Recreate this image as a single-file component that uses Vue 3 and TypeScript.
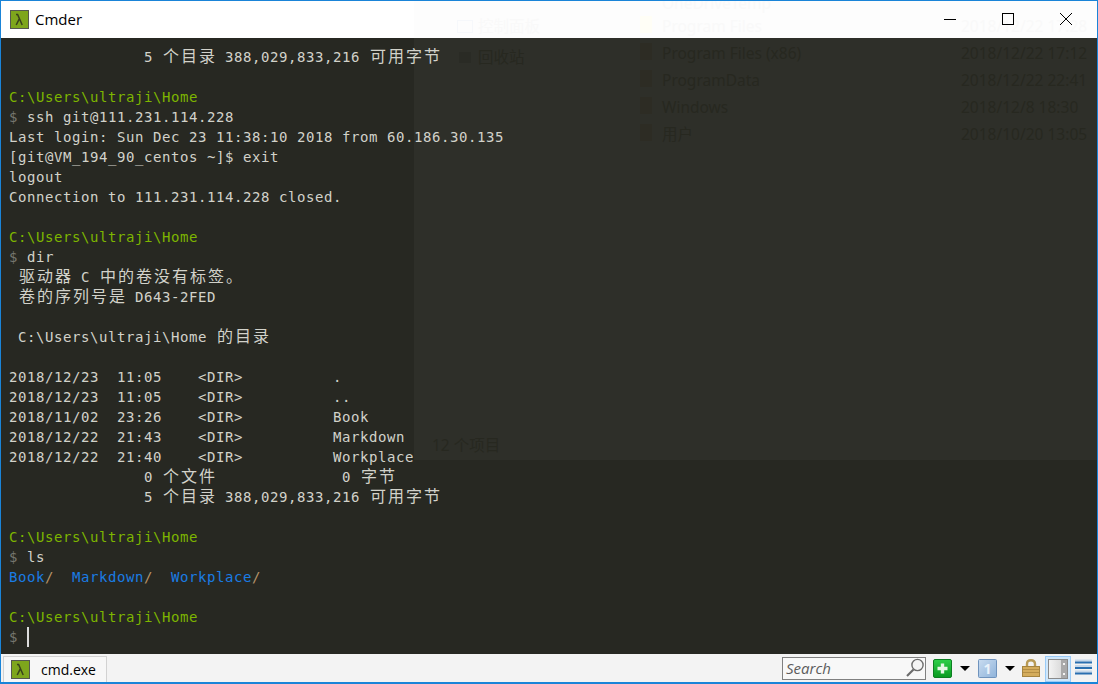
<script setup lang="ts">
type Seg = { t: string; c: string }
const txt = 'txt'
const path = 'C:\\Users\\ultraji\\Home'
const raw: Seg[][] = [
  [{ t: '               5 个目录 388,029,833,216 可用字节', c: txt }],
  [],
  [{ t: path, c: 'grn' }],
  [{ t: '$ ', c: 'dol' }, { t: 'ssh git@111.231.114.228', c: txt }],
  [{ t: 'Last login: Sun Dec 23 11:38:10 2018 from 60.186.30.135', c: txt }],
  [{ t: '[git@VM_194_90_centos ~]$ exit', c: txt }],
  [{ t: 'logout', c: txt }],
  [{ t: 'Connection to 111.231.114.228 closed.', c: txt }],
  [],
  [{ t: path, c: 'grn' }],
  [{ t: '$ ', c: 'dol' }, { t: 'dir', c: txt }],
  [{ t: ' 驱动器 C 中的卷没有标签。', c: txt }],
  [{ t: ' 卷的序列号是 D643-2FED', c: txt }],
  [],
  [{ t: ' C:\\Users\\ultraji\\Home 的目录', c: txt }],
  [],
  [{ t: '2018/12/23  11:05    <DIR>          .', c: txt }],
  [{ t: '2018/12/23  11:05    <DIR>          ..', c: txt }],
  [{ t: '2018/11/02  23:26    <DIR>          Book', c: txt }],
  [{ t: '2018/12/22  21:43    <DIR>          Markdown', c: txt }],
  [{ t: '2018/12/22  21:40    <DIR>          Workplace', c: txt }],
  [{ t: '               0 个文件              0 字节', c: txt }],
  [{ t: '               5 个目录 388,029,833,216 可用字节', c: txt }],
  [],
  [{ t: path, c: 'grn' }],
  [{ t: '$ ', c: 'dol' }, { t: 'ls', c: txt }],
  [
    { t: 'Book', c: 'dir' }, { t: '/', c: 'sl' }, { t: '  ', c: txt },
    { t: 'Markdown', c: 'dir' }, { t: '/', c: 'sl' }, { t: '  ', c: txt },
    { t: 'Workplace', c: 'dir' }, { t: '/', c: 'sl' },
  ],
  [],
  [{ t: path, c: 'grn' }],
  [{ t: '$ ', c: 'dol' }],
]

function split(seg: Seg): Seg[] {
  return seg.t
    .split(/([\u3000-\u9fff])/)
    .filter((s) => s.length > 0)
    .map((s) => ({ t: s, c: /[\u3000-\u9fff]/.test(s) ? seg.c + ' cjk' : seg.c }))
}
const lines = raw.map((l) => l.flatMap(split))
const lastLine = lines.length - 1

type Ghost = { t: string; x: number; y: number }
const ghosts: Ghost[] = [
  { t: 'OneDriveTemp', x: 248, y: -9 },
  { t: '控制面板', x: 64, y: 14 },
  { t: '回收站', x: 64, y: 45 },
  { t: 'Program Files', x: 248, y: 14 },
  { t: 'Program Files (x86)', x: 248, y: 41 },
  { t: 'ProgramData', x: 248, y: 68 },
  { t: 'Windows', x: 248, y: 95 },
  { t: '用户', x: 248, y: 122 },
  { t: '2018/12/22 17:28', x: 547, y: 14 },
  { t: '2018/12/22 17:12', x: 547, y: 41 },
  { t: '2018/12/22 22:41', x: 547, y: 68 },
  { t: '2018/12/8 18:30', x: 547, y: 95 },
  { t: '2018/10/20 13:05', x: 547, y: 122 },
  { t: '12 个项目', x: 18, y: 433 },
]
const titleGhosts = ghosts.filter((g) => g.y < 37)
const paneGhosts = ghosts.filter((g) => g.y >= 37)
const folderYs = [41, 68, 95, 122]
</script>

<template>
  <div class="window">
    <header class="titlebar">
      <div class="ghost ghost-light">
        <span v-for="g in titleGhosts" :key="g.t" class="g-text" :style="{ left: g.x + 'px', top: g.y + 'px' }">{{ g.t }}</span>
        <span class="g-folder" :style="{ left: '226px', top: '15px' }"></span>
        <span class="g-panel"></span>
      </div>
      <svg class="lambda" width="19" height="19" viewBox="0 0 19 19">
        <rect x="0.5" y="0.5" width="18" height="18" fill="#7ea61c" stroke="#55584e" />
        <path d="M6 4.5h1.6l4.6 10.5M9.4 8.6L6.2 15" fill="none" stroke="#38421c" stroke-width="1.5" />
      </svg>
      <span class="title">Cmder</span>
      <span class="spacer"></span>
      <svg class="ctl" width="58" height="37" viewBox="0 0 58 37">
        <path d="M23 18.5h12" stroke="#000" stroke-width="1" />
      </svg>
      <svg class="ctl" width="58" height="37" viewBox="0 0 58 37">
        <rect x="23.5" y="12.5" width="11" height="11" fill="none" stroke="#000" />
      </svg>
      <svg class="ctl" width="58" height="37" viewBox="0 0 58 37">
        <path d="M23 12l12 12M35 12L23 24" stroke="#000" stroke-width="1" />
      </svg>
    </header>

    <main class="terminal">
      <div class="ghost ghost-dark">
        <div class="ghost-pane"></div>
        <span v-for="g in paneGhosts" :key="g.t" class="g-text" :style="{ left: g.x + 'px', top: g.y - 37 + 'px' }">{{ g.t }}</span>
        <span v-for="y in folderYs" :key="y" class="g-folder" :style="{ left: '226px', top: y - 36 + 'px' }"></span>
        <span class="g-bin"></span>
      </div>
      <div class="console">
        <div v-for="(line, i) in lines" :key="i" class="line">
          <span v-for="(s, j) in line" :key="j" :class="s.c">{{ s.t }}</span>
          <span v-if="i === lastLine" class="cursor"></span>
        </div>
      </div>
    </main>

    <footer class="statusbar">
      <div class="tab">
        <svg width="19" height="19" viewBox="0 0 19 19">
          <rect x="0.5" y="0.5" width="18" height="18" fill="#7ea61c" stroke="#55584e" />
          <path d="M6 4.5h1.6l4.6 10.5M9.4 8.6L6.2 15" fill="none" stroke="#38421c" stroke-width="1.5" />
        </svg>
        <span class="tab-label">cmd.exe</span>
      </div>
      <span class="spacer"></span>
      <div class="search">
        <span class="search-label">Search</span>
        <svg class="mag" width="18" height="20" viewBox="0 0 18 20">
          <circle cx="11.5" cy="7" r="5.6" fill="#f4f4f4" stroke="#6c6c6c" stroke-width="1.4" />
          <path d="M7.5 11.5L1 18" stroke="#6c6c6c" stroke-width="2.2" />
        </svg>
      </div>
      <svg class="plus" width="19" height="19" viewBox="0 0 19 19">
        <defs>
          <linearGradient id="gg" x1="0" y1="0" x2="0" y2="1">
            <stop offset="0" stop-color="#2ed04a" />
            <stop offset="1" stop-color="#0a9a20" />
          </linearGradient>
        </defs>
        <rect x="0.5" y="0.5" width="18" height="18" rx="1.5" fill="url(#gg)" stroke="#0d7f22" />
        <path d="M9.5 4.5v10M4.5 9.5h10" stroke="#e6f7e6" stroke-width="3.4" />
      </svg>
      <svg class="arrow" width="10" height="5" viewBox="0 0 10 5"><path d="M0 0h10L5 5z" fill="#000" /></svg>
      <svg class="one" width="19" height="19" viewBox="0 0 19 19">
        <defs>
          <linearGradient id="bg" x1="0" y1="0" x2="1" y2="1">
            <stop offset="0" stop-color="#c9dcf0" />
            <stop offset="1" stop-color="#8fb3da" />
          </linearGradient>
        </defs>
        <rect x="0.5" y="0.5" width="18" height="18" rx="1" fill="url(#bg)" stroke="#6f93bd" />
        <text x="9.5" y="14.5" text-anchor="middle" class="one-digit">1</text>
      </svg>
      <svg class="arrow" width="10" height="5" viewBox="0 0 10 5"><path d="M0 0h10L5 5z" fill="#000" /></svg>
      <svg class="lock" width="18" height="18" viewBox="0 0 18 18">
        <path d="M5 8V5C5 2.6 6.5 1.2 9 1.2S13 2.6 13 5V8" fill="none" stroke="#b89a55" stroke-width="2.4" />
        <rect x="0.5" y="7.5" width="17" height="10" fill="#d4ac5c" stroke="#a58440" />
        <path d="M1 10.5h16M1 13.5h16" stroke="#b48e45" stroke-width="1" />
      </svg>
      <div class="panel-btn">
        <svg width="20" height="20" viewBox="0 0 20 20">
          <defs>
            <linearGradient id="pg" x1="0" y1="0" x2="1" y2="0">
              <stop offset="0" stop-color="#f4f4f4" />
              <stop offset="1" stop-color="#cfcfcf" />
            </linearGradient>
          </defs>
          <rect x="0.5" y="0.5" width="19" height="19" fill="url(#pg)" stroke="#8a8a8a" />
          <rect x="13" y="1" width="6" height="18" fill="#a9a9a9" />
          <rect x="15" y="4" width="2" height="2" fill="#f4f4f4" />
          <rect x="15" y="14" width="2" height="2" fill="#f4f4f4" />
        </svg>
      </div>
      <svg class="menu" width="17" height="18" viewBox="0 0 17 18">
        <path d="M0 1.5h17M0 7h17M0 12.5h17" stroke="#c6d8ea" stroke-width="2" />
        <path d="M0 3.5h17M0 9h17M0 14.5h17" stroke="#2a6fb0" stroke-width="2" />
      </svg>
    </footer>
  </div>
</template>

<style scoped>
.window {
  width: 1098px;
  height: 684px;
  box-sizing: border-box;
  border: 1px solid #1a84d8;
  border-bottom-width: 2px;
  display: flex;
  flex-direction: column;
  overflow: hidden;
  background: #272822;
}
.titlebar {
  position: relative;
  height: 37px;
  flex: none;
  display: flex;
  align-items: center;
  padding-right: 2px;
  background: #fff;
  overflow: hidden;
}
.lambda {
  position: relative;
  margin-left: 9px;
  flex: none;
}
.title {
  position: relative;
  margin: -2px 0 0 6px;
  font: 15px "Open Sans", "Noto Sans", sans-serif;
  color: #000;
}
.spacer {
  flex: 1;
}
.ctl {
  position: relative;
  flex: none;
}
.ghost {
  position: absolute;
  left: 413px;
  top: 0;
  right: 0;
  font: 15.5px "Noto Sans", "Noto Sans CJK SC", sans-serif;
  white-space: nowrap;
}
.ghost-light {
  bottom: 0;
  background: #fdfdfd;
  color: #f9f9f9;
}
.ghost-dark {
  height: 422px;
  color: #272820;
}
.ghost-pane {
  position: absolute;
  inset: 0;
  background: #2e2f29;
}
.g-text {
  position: absolute;
  line-height: 22px;
}
.g-folder {
  position: absolute;
  width: 12px;
  height: 17px;
  background: #2d2c24;
}
.ghost-light .g-folder {
  background: #fffef6;
}
.g-panel {
  position: absolute;
  left: 43px;
  top: 19px;
  width: 14px;
  height: 11px;
  border: 1px solid #f6f8fb;
}
.g-bin {
  position: absolute;
  left: 45px;
  top: 14px;
  width: 12px;
  height: 11px;
  background: #2a2b25;
}
.terminal {
  position: relative;
  flex: 1;
  min-height: 0;
  overflow: hidden;
}
.console {
  position: relative;
  padding: 9px 0 0 8px;
  font: 14px/20px "DejaVu Sans Mono", "Noto Sans CJK SC", monospace;
  letter-spacing: 0.572px;
}
.line {
  height: 20px;
  white-space: pre;
  display: flex;
}
.txt {
  color: #d2d2ca;
}
.grn {
  color: #7db500;
}
.dol {
  color: #75766f;
}
.dir {
  color: #1a7ce4;
}
.sl {
  color: #b5946a;
}
.cjk {
  width: 18px;
  flex: none;
  text-align: center;
  font: 16px/16px "Noto Sans CJK SC", sans-serif;
  letter-spacing: 0;
}
.cursor {
  width: 2px;
  height: 20px;
  background: #dcdcdc;
}
.statusbar {
  height: 28px;
  flex: none;
  display: flex;
  align-items: center;
  background: #f3f3f3;
}
.tab {
  margin: 2px 0 0 2px;
  width: 104px;
  height: 26px;
  box-sizing: border-box;
  border: 1px solid #d2d2d2;
  border-bottom: none;
  background: #f7f7f7;
  display: flex;
  align-items: center;
  padding-left: 7px;
}
.tab-label {
  margin-left: 11px;
  font: 14px "Open Sans", "Noto Sans", sans-serif;
  color: #000;
}
.search {
  width: 144px;
  height: 23px;
  box-sizing: border-box;
  border: 1px solid #808080;
  background: #f8f8f8;
  display: flex;
  align-items: center;
  justify-content: space-between;
  padding: 0 1px 0 3px;
}
.search-label {
  font: italic 15px "Open Sans", "Noto Sans", sans-serif;
  color: #5c5c5c;
}
.plus {
  margin-left: 7px;
  flex: none;
}
.arrow {
  margin: 1px 0 0 8px;
  flex: none;
}
.one {
  margin-left: 8px;
  flex: none;
}
.one-digit {
  font: bold 14px "Open Sans", sans-serif;
  fill: #eaf2fa;
}
.lock {
  margin-left: 7px;
  flex: none;
}
.panel-btn {
  margin: 2px 0 0 5px;
  width: 26px;
  height: 26px;
  box-sizing: border-box;
  background: #cfe7fb;
  border: 1px solid #9acbf7;
  display: flex;
  align-items: center;
  justify-content: center;
  flex: none;
}
.menu {
  margin: 0 5px 0 4px;
  flex: none;
}
</style>
